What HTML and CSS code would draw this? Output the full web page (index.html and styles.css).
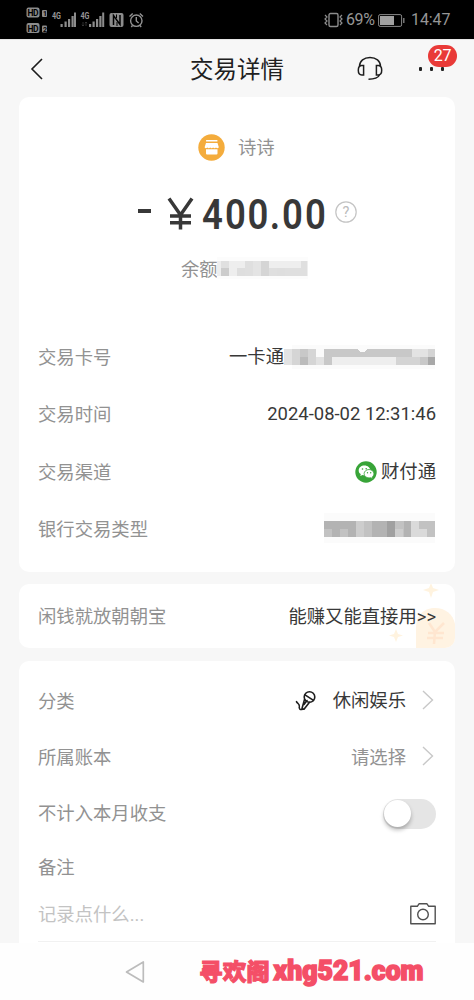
FILE: index.html
```
<!DOCTYPE html>
<html lang="zh-CN">
<head>
<meta charset="utf-8">
<title>交易详情</title>
<link rel="stylesheet" href="styles.css">
</head>
<body>
<div class="screen">
  <div class="status">
    <svg class="status-left" width="130" height="39" viewBox="0 0 130 39">
      <g fill="#8c8c8c">
        <rect x="0.5" y="7.5" width="13" height="10" rx="2"/>
        <rect x="0.5" y="23" width="13" height="10" rx="2"/>
        <rect x="16" y="10" width="5" height="7" rx="1"/>
        <rect x="16" y="25.500" width="5" height="7" rx="1"/>
        <path d="M34.500 24h2.200v3h-2.200zM38.500 21.500h2.200v5.500h-2.200zM42 19h2.200v8H42zM45.500 16h2.200v11h-2.200zM48 12.500h2v14.500h-2z"/>
        <path d="M63 24h2.200v3H63zM66.500 21.500h2.200v5.500h-2.200zM70 19h2.200v8H70zM73.300 16h2.200v11h-2.200zM76.200 12.500h2v14.500h-2z"/>
        <rect x="83.500" y="13" width="14" height="14" rx="2"/>
      </g>
      <path d="M87.500 25V15.500l6.500 9V15" fill="none" stroke="#000" stroke-width="1.500"/>
      <path d="M90.500 14.500v3.500M91 22v4" fill="none" stroke="#000" stroke-width="1"/>
      <g class="hd"><text x="1.500" y="16" textLength="11">HD</text><text x="1.500" y="31.500" textLength="11">HD</text></g>
      <g class="sim"><text x="17" y="16">1</text><text x="17" y="31.500">2</text></g>
      <g class="net"><text x="26" y="18.500" textLength="9" lengthAdjust="spacingAndGlyphs">4G</text><text x="54.500" y="18.500" textLength="9" lengthAdjust="spacingAndGlyphs">4G</text></g>
      <path d="M57 22v4m-1.200-1.200L57 26l1.200-1.200M60 26v-4m-1.200 1.200L60 22l1.200 1.200" stroke="#444" stroke-width=".7" fill="none"/>
      <g fill="none" stroke="#929292" stroke-width="1.400"><circle cx="110.300" cy="20.700" r="5.700"/><path d="M110.300 17v4l2.300 2M103.500 16.500l3.200-3M117 16.500l-3.200-3M106.500 25.500l-1.200 1.500M114 25.500l1.200 1.500"/></g>
    </svg>
    <div class="status-right">
      <svg width="19" height="16" viewBox="0 0 19 16" fill="none" stroke="#8c8c8c"><rect x="5" y="1.500" width="9" height="13" rx="1.500" stroke-width="1.400"/><path d="M1 3l2 2-2 2 2 2-2 2 2 2M18 3l-2 2 2 2-2 2 2 2-2 2" stroke-width="1.200"/></svg>
      <span class="pct">69%</span>
      <svg class="battery" width="27" height="13" viewBox="0 0 27 13"><rect x=".6" y=".6" width="23" height="11.800" rx="1.500" fill="none" stroke="#888" stroke-width="1"/><rect x="2" y="2" width="14" height="9" fill="#a0a0a0"/><path d="M25.800 4v5" stroke="#888" stroke-width="1.300"/></svg>
      <span class="clock">14:47</span>
    </div>
  </div>

  <div class="header">
    <svg class="back" width="14" height="22" viewBox="0 0 14 22"><path d="M12 1L2 11l10 10" fill="none" stroke="#1c1c1c" stroke-width="1.600"/></svg>
    <h1 class="title">交易详情</h1>
    <svg class="headset" width="26" height="25" viewBox="0 0 26 25" fill="none" stroke="#1d1d1d" stroke-width="1.500"><path d="M2.500 10.500C2.500 5 7 1.500 13 1.500s10.500 3.500 10.500 9"/><path d="M6.600 9.500v9.500H4.800C2.500 19 1.300 17 1.300 14.300s1.200-4.800 3.500-4.800zM19.400 9.500v9.500h1.800c2.300 0 3.500-2 3.500-4.700s-1.200-4.800-3.500-4.800zM22.500 19c-1.500 3-4.500 4.200-11 4.200"/></svg>
    <div class="more"><i class="dot"></i><i class="dot"></i><i class="dot"></i><span class="badge">27</span></div>
  </div>

  <div class="card summary">
    <div class="payee">
      <svg width="27" height="27" viewBox="0 0 27 27"><circle cx="13.500" cy="13.500" r="13.200" fill="#f4ac3c"/><g fill="#fff"><rect x="8" y="6" width="11.500" height="1.600" rx=".5"/><path d="M8 9h11.500l1.300 4.300c-.7 1.200-2 1.200-2.800.2-.8 1-2.100 1-2.900 0-.8 1-2.100 1-2.900 0-.8 1-2.100 1-2.900 0-.8 1-2.100 1-2.700-.2z"/><path d="M8 15.300h11.500v4.200q0 1-1 1H9q-1 0-1-1z"/></g></svg>
      <span>诗诗</span>
    </div>
    <div class="amount">
      <svg width="190" height="54" viewBox="0 -6 190 54"><rect x="1" y="18" width="13" height="4" fill="#383838"/><path d="M32 7.500L43.500 24 55 7.500M43.500 23v15.500M33 25h21M33 31.800h21" fill="none" stroke="#383838" stroke-width="3.500"/><text transform="scale(.86 1)" x="75.600 102.300 128.400 154.500 168.600 195.300" y="38">400.00</text></svg>
      <svg class="help" width="22" height="22" viewBox="0 0 22 22"><circle cx="11" cy="11" r="10.200" fill="none" stroke="#c4c4c4" stroke-width="1.200"/><text x="11" y="16" text-anchor="middle">?</text></svg>
    </div>
    <div class="balance"><span>余额</span>
      <svg width="91" height="24" viewBox="5 0 91 24" shape-rendering="crispEdges"><path d="M5 0h91v22H5z" fill="#fcfcfc"/><path d="M5 4h91v15H5z" fill="#eee"/><path d="M9 4h8v7H9z" fill="#e0e0e0"/><path d="M9 11h8v8H9z" fill="#ccc"/><path d="M25 11h8v8h-8zM65 11h8v8h-8z" fill="#dedede"/><path d="M33 4h8v15h-8zM57 11h8v8h-8zM73 11h22v8H73zM89 4h6v7h-6z" fill="#dfdfdf"/><path d="M49 4h8v15h-8z" fill="#d5d5d5"/><path d="M41 4h8v15h-8z" fill="#e4e4e4"/></svg>
    </div>
    <div class="details">
      <div class="row"><span class="label">交易卡号</span><span class="value">一卡通<svg class="mask" width="151" height="24" viewBox="0 0 151 24" shape-rendering="crispEdges"><path d="M8 0h143v24H8z" fill="#fbfbfb"/><path d="M0 4h151v16H0z" fill="#c8c8c8"/><path d="M0 4h8v16H0zM128 4h16v8h-16z" fill="#e3e3e3"/><path d="M8 4h8v16H8zM24 4h8v16h-8z" fill="#d5d5d5"/><path d="M16 12h8v8h-8z" fill="#bbb"/><path d="M32 4h8v8h-8z" fill="#fafafa"/><path d="M32 12h8v8h-8z" fill="#e2e2e2"/><path d="M48 12h64v8H48z" fill="#eee"/><path d="M112 12h24v8h-24zM144 4h7v8h-7z" fill="#d4d4d4"/><path d="M144 12h7v8h-7z" fill="#a8a8a8"/><path d="M73 4h10l-3 3h-4z" fill="#fbfbfb"/></svg></span></div>
      <div class="row"><span class="label">交易时间</span><span class="value time">2024-08-02 12:31:46</span></div>
      <div class="row"><span class="label">交易渠道</span><span class="value"><svg class="wechat" width="22" height="22" viewBox="0 0 22 22"><circle cx="11" cy="11" r="10.700" fill="#38a438"/><path d="M9.500 4.500c-3.300 0-5.800 2.100-5.800 4.900 0 1.600.8 2.900 2.100 3.700l-.5 2 2.200-1.200c.7.200 1.300.3 2 .3 3.200 0 5.800-2.100 5.800-4.800S12.700 4.500 9.500 4.500z" fill="#fff"/><path d="M14 8.500c-2.700 0-4.900 1.900-4.900 4.200s2.200 4.200 4.900 4.200c.6 0 1.200-.1 1.700-.2l1.900 1-.4-1.700c1-.8 1.700-1.900 1.700-3.300 0-2.300-2.200-4.200-4.900-4.200z" fill="#fff" stroke="#38a438" stroke-width=".8"/><g fill="#38a438"><circle cx="7.500" cy="8" r=".8"/><circle cx="11.200" cy="7.700" r=".8"/><circle cx="12.500" cy="11.700" r=".7"/><circle cx="15.700" cy="11.700" r=".7"/></g></svg>财付通</span></div>
      <div class="row"><span class="label">银行交易类型</span><span class="value"><svg class="mask" width="111" height="32" viewBox="0 0 111 32" shape-rendering="crispEdges"><path d="M0 0h111v30H0z" fill="#fbfbfb"/><path d="M0 8h111v16H0z" fill="#c2c2c2"/><path d="M0 8h32v8H0zM8 16h8v8H8zM24 16h8v8h-8zM48 8h16v16H48zM80 8h8v16h-8z" fill="#b3b3b3"/><path d="M63 8h8v16h-8z" fill="#a0a0a0"/><path d="M32 8h8v16h-8zM71 16h8v8h-8z" fill="#cdcdcd"/><path d="M87 8h8v16h-8zM95 16h8v8h-8z" fill="#dadada"/></svg></span></div>
    </div>
  </div>

  <div class="card promo">
    <svg class="promo-art" width="66" height="64" viewBox="0 0 66 64"><path d="M27 64V44C27 30 36 24 46 24S64 30 66 40v24z" fill="#fff3e2"/><g fill="#fff3df"><path d="M42-1l2 5 6 2-6 2-2 6-2-6-6-2 6-2zM7 45l2 5 5 1.500L9 53l-2 5-2-5-5-1.500L5 50z"/></g><path d="M40 39l6 9 9-9M46 47l-1 13M39 49h16M38 54h16" fill="none" stroke="#ffe6d0" stroke-width="2.600"/></svg>
    <span class="label">闲钱就放朝朝宝</span><span class="value link">能赚又能直接用&gt;&gt;</span>
  </div>

  <div class="card settings">
    <div class="setting"><span class="label">分类</span><span class="value"><svg class="mic" width="22" height="22" viewBox="0 0 22 22" fill="none" stroke="#1d1d1d" stroke-width="1.600" stroke-linejoin="round" stroke-linecap="round"><circle cx="14.500" cy="7" r="5.300"/><path d="M10 4.800l8.500 5.500M9.500 9.500L7 18.500l2 .8 5.500-7M12 10.500l-3 4M8 19c-3 1.300-4.200 0-3.700-2.500.4-2.500-1.300-2.500-2.800-4.800"/></svg>休闲娱乐</span><svg class="chevron" width="12" height="20" viewBox="0 0 12 20"><path d="M1 1l9.500 9L1 19" fill="none" stroke="#c8c8c8" stroke-width="1.400"/></svg></div>
    <div class="setting"><span class="label">所属账本</span><span class="label choose">请选择</span><svg class="chevron" width="12" height="20" viewBox="0 0 12 20"><path d="M1 1l9.500 9L1 19" fill="none" stroke="#c8c8c8" stroke-width="1.400"/></svg></div>
    <div class="setting"><span class="label">不计入本月收支</span><span class="toggle"><i class="knob"></i></span></div>
    <div class="setting remark"><span class="label">备注</span></div>
    <div class="note"><span>记录点什么...</span><svg width="26" height="22" viewBox="0 0 26 22" fill="none" stroke="#505050" stroke-width="1.400" stroke-linejoin="round"><path d="M.8 3.300h6.500l1.700-2.500h8l1.700 2.500h6.500v17.500H.8z"/><circle cx="13" cy="11.500" r="5.300"/></svg></div>
  </div>

  <div class="navbar">
    <svg class="nav-back" width="20" height="24" viewBox="0 0 20 24"><path d="M18.300 2v20L1.500 12z" fill="none" stroke="#bcbcbc" stroke-width="1.700" stroke-linejoin="round"/></svg>
    <svg class="site" width="234" height="41" viewBox="0 -7 234 41"><text class="site-cn" x="1" y="21" textLength="71" lengthAdjust="spacingAndGlyphs">寻欢阁</text><text class="site-en" x="75.500" y="21" textLength="150" lengthAdjust="spacingAndGlyphs">xhg521.com</text></svg>
  </div>
</div>
</body>
</html>
```
FILE: styles.css
```
* { box-sizing: border-box; }
body {
  margin: 0;
  background: #f7f7f7;
  color: #383838;
  font-family: Roboto, "Noto Sans CJK SC", sans-serif;
  font-size: 18.35px;
  line-height: 26px;
}
svg { display: block; flex: none; }
.screen { width: 474px; height: 1000px; overflow: hidden; display: flex; flex-direction: column; }

.status { height: 39px; background: #000; display: flex; justify-content: space-between; padding: 0 25px 0 26px; flex: none; }
.status-right { display: flex; align-items: center; color: #969696; font-size: 16px; height: 40px; }
.pct { margin-left: 3px; width: 30px; letter-spacing: -.4px; }
.battery { margin-left: 2px; }
.clock { margin-left: 6px; width: 38px; letter-spacing: -.1px; white-space: nowrap; }
.hd { font-size: 8.5px; font-weight: 700; fill: #000; }
.sim { font-size: 7px; font-weight: 700; fill: #000; }
.net { font-size: 9px; font-weight: 700; fill: #969696; }

.header { height: 58px; display: flex; align-items: center; flex: none; padding-left: 30px; border-top: 1px solid #e5e5e5; }
.title { margin: 2px 0 0 146px; font-size: 23.5px; font-weight: 400; line-height: 34px; color: #202020; width: 94px; white-space: nowrap; }
.headset { margin-left: 73px; }
.more { position: relative; margin-left: 36px; display: flex; gap: 8px; }
.dot { width: 3px; height: 4px; background: #222; border-radius: 1px; }
.badge { position: absolute; left: 9px; top: -22px; width: 29px; height: 22px; border-radius: 11px; background: #e93a38; color: #fff; font-size: 16px; line-height: 22px; text-align: center; letter-spacing: -.3px; }

.card { margin: 0 19px; background: #fff; border-radius: 10px; flex: none; }
.summary { height: 475px; padding: 37px 19px 0; }
.payee { display: flex; align-items: center; gap: 13px; height: 27px; padding-left: 160px; color: #929292; }
.amount { display: flex; align-items: center; margin-top: 24px; padding-left: 99px; gap: 8px; }
.amount text { font-size: 42.500px; font-weight: 600; fill: #383838; }
.amount .help text { font-size: 14.500px; font-weight: 400; fill: #bbb; }
.balance { display: flex; align-items: center; margin-top: 17px; padding-left: 143px; color: #929292; height: 26px; }
.balance span { width: 36px; white-space: nowrap; margin-top: 1px; }
.details { margin-top: 46px; }
.row { height: 57.5px; display: flex; align-items: center; justify-content: space-between; padding-top: 2px; }
.label { color: #929292; }
.value { display: flex; align-items: center; margin-bottom: 2px; }
.mask { margin-right: 1px; }
.row .value .mask { margin-top: 0; }
.time { font-size: 18.45px; }
.wechat { margin-right: 4px; }

.promo { position: relative; height: 64px; margin-top: 12px; padding: 0 19px; display: flex; align-items: center; justify-content: space-between; overflow: hidden; }
.promo .label, .promo .value { position: relative; margin: 1px 0 0; }
.promo-art { position: absolute; right: 0; top: 0; }

.settings { margin-top: 13px; height: 282px; padding: 12px 19px 0; border-radius: 10px 10px 0 0; }
.setting { display: flex; align-items: center; height: 56px; }
.setting .label { margin-top: 2px; }
.setting .label:first-child { margin-right: auto; }
.setting .value { margin-bottom: 0; }
.mic { margin-right: 16px; }
.chevron { margin: -2px 2px 0 16px; }
.toggle { width: 53px; height: 30px; border-radius: 15px; background: #e5e5e5; margin-top: 2px; }
.knob { display: block; width: 27px; height: 27px; margin: 1px 0 0 1px; border-radius: 50%; background: #fff; box-shadow: 0 3px 4px #0004; }
.remark { height: 51px; }
.note { display: flex; align-items: center; justify-content: space-between; height: 51px; margin-top: -1px; padding-bottom: 4px; border-bottom: 1px solid #f1f1f1; color: #c3c3c3; }
.note span { margin-top: 2px; }

.navbar { flex: 1; background: #fefefe; display: flex; align-items: flex-start; padding: 9px 0 0 125px; }
.nav-back { margin-top: 8px; }
.site { margin-left: 53px; }
.site text { fill: #f44f67; stroke: #f44f67; }
.site-cn { font-family: "Noto Sans CJK SC", sans-serif; font-weight: 900; font-size: 23px; stroke-width: 1px; }
.site-en { font-family: Roboto, sans-serif; font-weight: 900; font-size: 28px; stroke-width: 1.6px; }
```
